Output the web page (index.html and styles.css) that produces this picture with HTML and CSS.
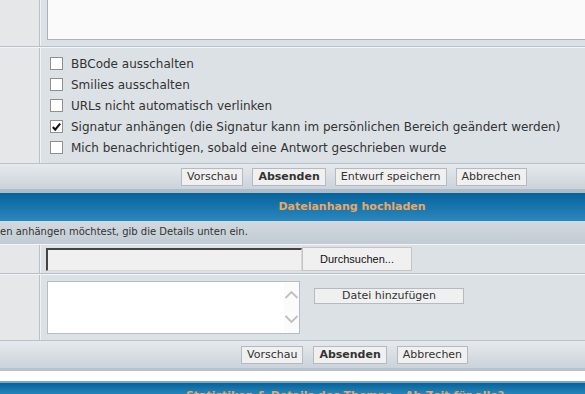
FILE: index.html
```html
<!DOCTYPE html>
<html lang="de">
<head>
    <meta charset="UTF-8">
    <title>Antwort erstellen</title>
    <link rel="stylesheet" href="styles.css">
</head>
<body>
    <div class="panel">
        <div class="row row-msg">
            <div class="lbl"></div>
            <div class="field">
                <textarea class="message"></textarea>
            </div>
        </div>
        <div class="row">
            <div class="lbl"></div>
            <div class="field options">
                <label class="opt"><span class="box"></span>BBCode ausschalten</label>
                <label class="opt"><span class="box"></span>Smilies ausschalten</label>
                <label class="opt"><span class="box"></span>URLs nicht automatisch verlinken</label>
                <label class="opt"><span class="box">
                    <svg width="12" height="12" viewBox="0 0 12 12"><path d="M2 6 L4.6 9 L10 2.2" fill="none" stroke="#111" stroke-width="2.2"/></svg>
                </span>Signatur anhängen (die Signatur kann im persönlichen Bereich geändert werden)</label>
                <label class="opt"><span class="box"></span>Mich benachrichtigen, sobald eine Antwort geschrieben wurde</label>
            </div>
        </div>
        <div class="bar bar-post">
            <button class="btn">Vorschau</button>
            <button class="btn btn-main">Absenden</button>
            <button class="btn">Entwurf speichern</button>
            <button class="btn">Abbrechen</button>
        </div>

        <div class="cat-head">Dateianhang hochladen</div>
        <div class="info">en anhängen möchtest, gib die Details unten ein.</div>
        <div class="row">
            <div class="lbl"></div>
            <div class="field file-field">
                <span class="file-path"></span>
                <button class="browse">Durchsuchen...</button>
            </div>
        </div>
        <div class="row">
            <div class="lbl"></div>
            <div class="field comment-field">
                <div class="comment">
                    <span class="scroll">
                        <svg width="15" height="51" viewBox="0 0 15 51"><path d="M1.5 16 L7.5 10 L13.5 16" fill="none" stroke="#c0c0c0" stroke-width="1.8"/><path d="M1.5 34 L7.5 40 L13.5 34" fill="none" stroke="#c0c0c0" stroke-width="1.8"/></svg>
                    </span>
                </div>
                <button class="btn btn-add">Datei hinzufügen</button>
            </div>
        </div>
        <div class="bar bar-upload">
            <button class="btn">Vorschau</button>
            <button class="btn btn-main">Absenden</button>
            <button class="btn">Abbrechen</button>
        </div>
    </div>

    <div class="gap"></div>
    <div class="cat-head cat-stats">Statistiken &amp; Details des Themas – Ab Zeit für alle?</div>
</body>
</html>
```

FILE: styles.css
```css
body {
    margin: 0;
    background: #ffffff;
    font-family: "DejaVu Sans", Verdana, sans-serif;
    font-size: 12px;
    color: #333333;
    overflow: hidden;
}
.panel {
    background: #dce1e6;
}
.row {
    display: grid;
    grid-template-columns: 40px 1fr;
    border-bottom: 1px solid #b9c2ca;
    border-top: 1px solid #f2f4f6;
}
.lbl {
    background: #e5e7e9;
    border-right: 1px solid #b9c2ca;
}
.field {
    background: #dce1e6;
    border-left: 1px solid #f0f2f4;
}
.row-msg {
    border-top: none;
    height: 46px;
}
.row-msg .field {
    padding-left: 6px;
}
.message {
    display: block;
    width: 560px;
    height: 40px;
    margin: 0;
    box-sizing: border-box;
    border: 1px solid #aab3bb;
    border-top: none;
    background: #fafafa;
    resize: none;
}
.options {
    padding: 5px 0 5px 9px;
    display: flex;
    flex-direction: column;
}
.opt {
    display: flex;
    align-items: center;
    height: 21px;
    font-size: 12px;
    color: #333;
    white-space: nowrap;
}
.box {
    width: 11px;
    height: 11px;
    border: 1px solid #8f8f8f;
    background: #ffffff;
    margin-right: 8px;
    display: flex;
    align-items: center;
    justify-content: center;
}
.box svg {
    display: block;
}
.bar {
    display: flex;
    gap: 8px;
    align-items: center;
    height: 25px;
    background: linear-gradient(#e6eaee, #cbd2d9);
    border-bottom: 4px solid #aebcc8;
}
.bar-post {
    padding-left: 181px;
    gap: 9px;
}
.bar-upload {
    padding-left: 241px;
    height: 27px;
    gap: 10px;
    border-bottom: 3px solid #b8c2cb;
}
.btn {
    font-family: "DejaVu Sans", Verdana, sans-serif;
    font-size: 11px;
    color: #333;
    height: 18px;
    padding: 0 5px;
    background: #f0f0f0;
    border: 1px solid #b4bac0;
    border-radius: 0;
    line-height: 16px;
}
.btn-main {
    font-weight: bold;
}
.cat-head {
    height: 28px;
    line-height: 28px;
    background: linear-gradient(#07639b, #2a88be);
    color: #eba864;
    font-weight: bold;
    font-size: 11px;
    text-align: center;
    padding-left: 119px;
}
.info {
    height: 23px;
    line-height: 21px;
    background: linear-gradient(#d2d9df, #c2cbd3);
    font-size: 10px;
    color: #333;
    white-space: nowrap;
}
.file-field {
    display: flex;
    align-items: center;
    height: 28px;
    padding-left: 5px;
}
.file-path {
    width: 253px;
    height: 20px;
    background: #f0f0f0;
    border: 2px solid #444;
    border-right: 1px solid #d8d8d8;
    border-bottom: 1px solid #d8d8d8;
}
.browse {
    width: 110px;
    height: 24px;
    font-family: "Liberation Sans", Arial, sans-serif;
    font-size: 11px;
    color: #111;
    background: #f0f0f0;
    border: 1px solid #c4c4c4;
    border-radius: 0;
}
.comment-field {
    display: flex;
    align-items: flex-start;
    height: 65px;
    padding: 6px 0 0 6px;
    box-sizing: border-box;
}
.comment {
    width: 253px;
    height: 53px;
    box-sizing: border-box;
    background: #ffffff;
    border: 1px solid #b4bcc4;
    display: flex;
    justify-content: flex-end;
}
.scroll {
    width: 15px;
    background: #fbfbfb;
}
.btn-add {
    margin: 7px 0 0 14px;
    width: 150px;
    height: 16px;
    line-height: 14px;
}
.gap {
    height: 10px;
    border-bottom: 2px solid #7fa8c8;
}
.cat-stats {
    height: 12px;
    line-height: 26px;
    padding-left: 105px;
    overflow: hidden;
}
```
